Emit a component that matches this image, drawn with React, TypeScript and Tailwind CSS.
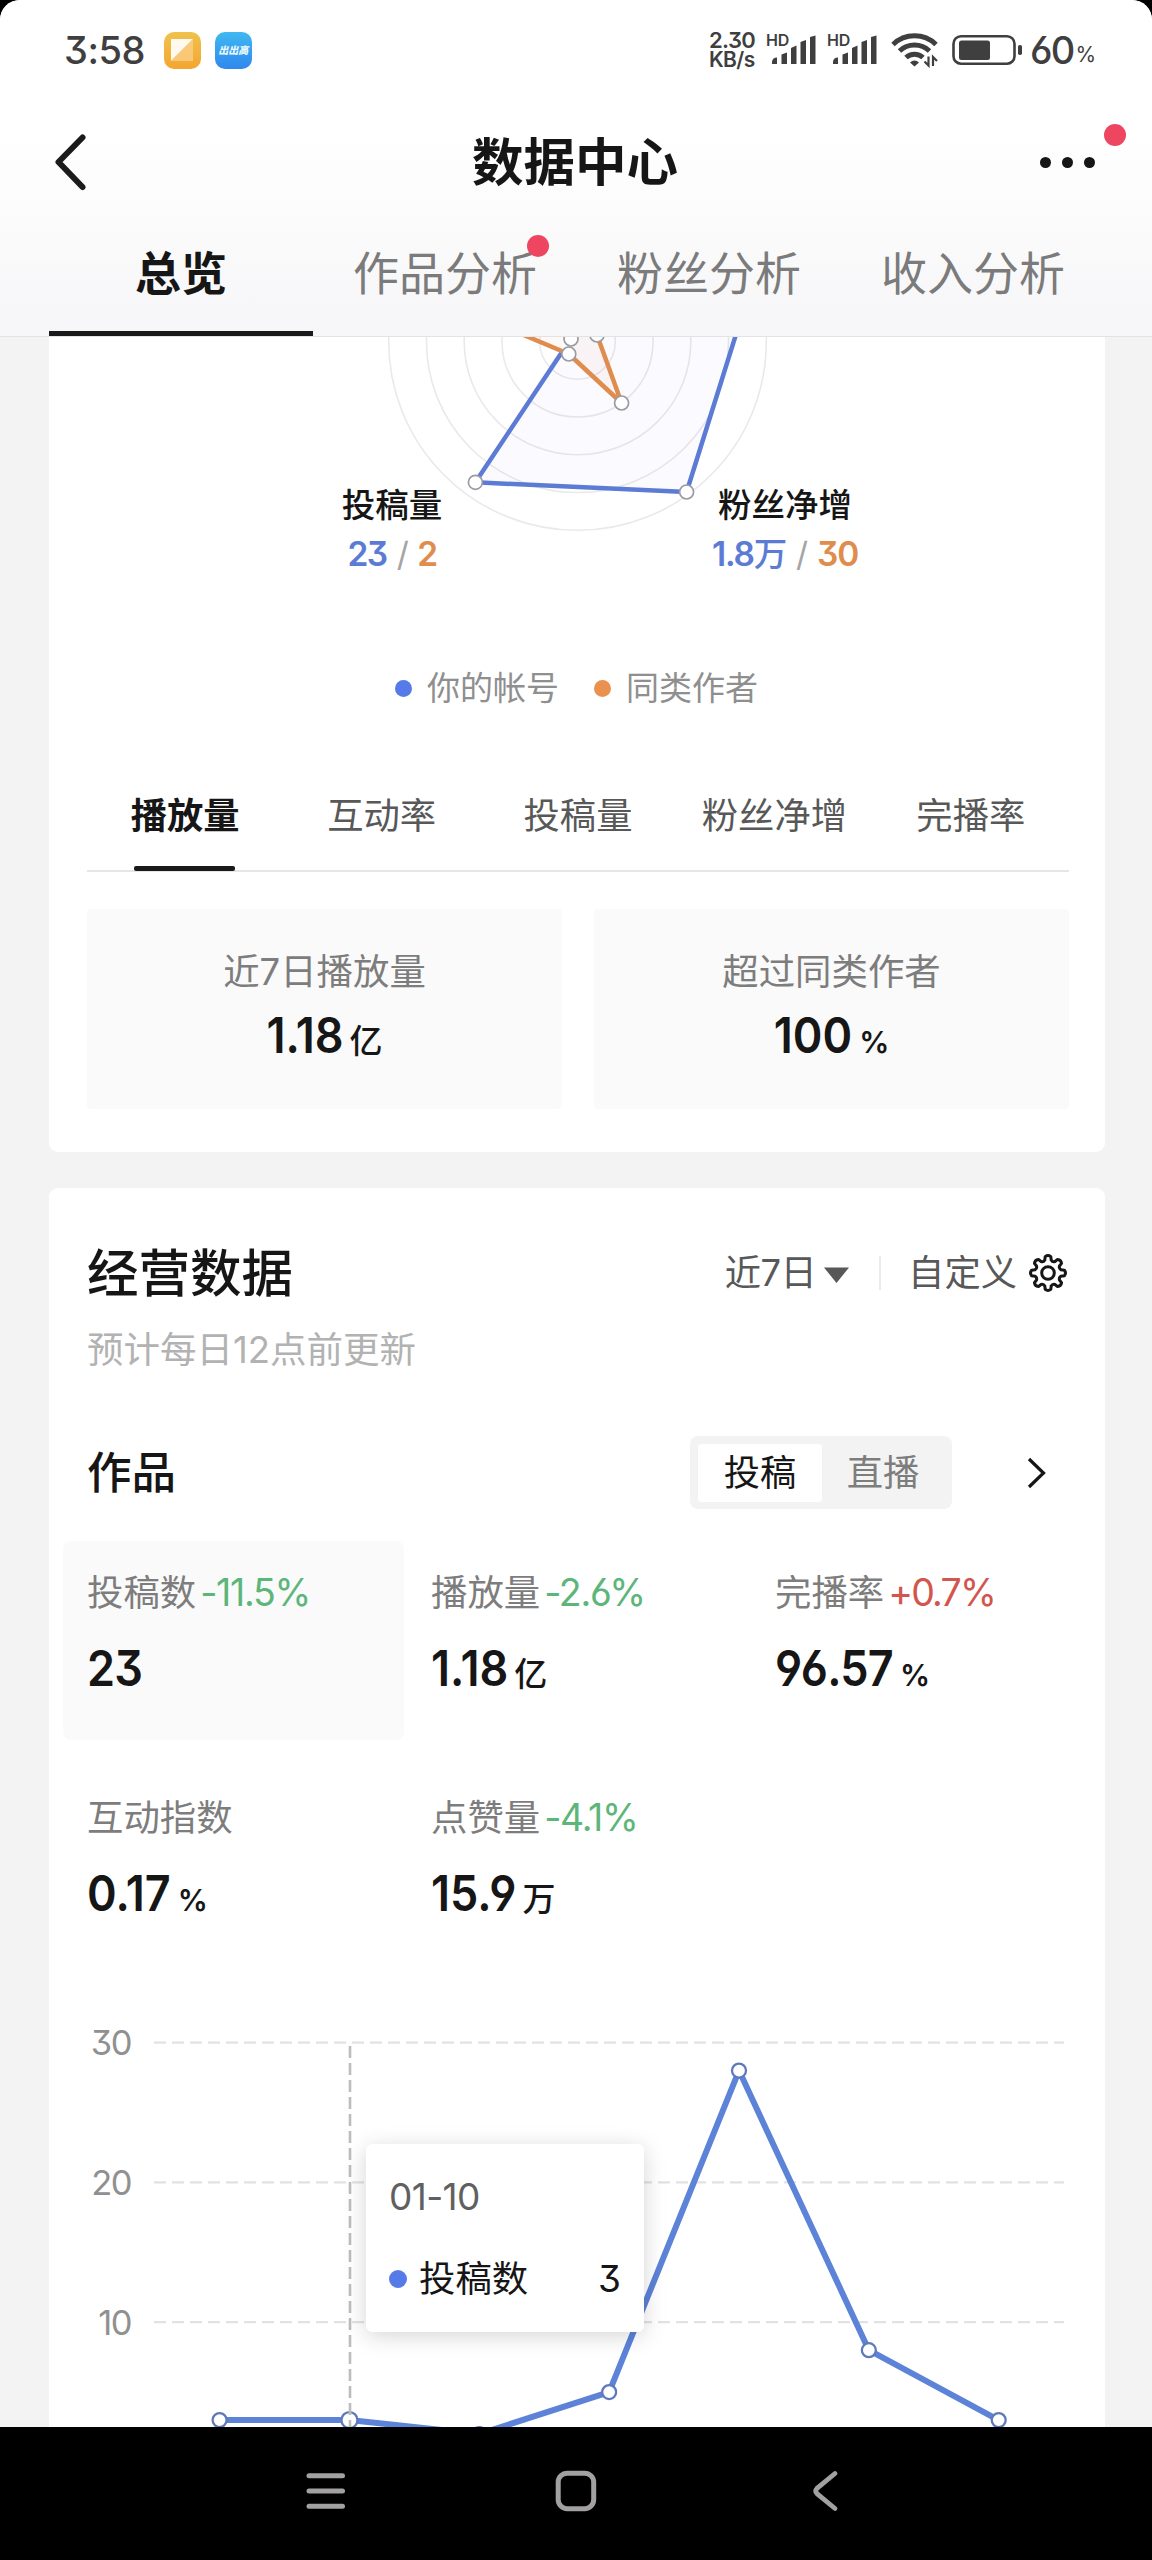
import React from "react";

const SignalBars = () => (
  <svg width="46" height="30" viewBox="0 0 46 30" fill="#3f3f3f">
    <path d="M1 29v-2.500a5 5 0 0 1 5-4V29z" />
    <path d="M10.500 29V19.500l5.500-2V29z" />
    <path d="M20 29V13l5.500-2.500V29z" />
    <path d="M29.500 29V7l5.500-2V29z" />
    <path d="M39 29V2l5.500-1.500V29z" />
  </svg>
);

const StatusBar = () => (
  <div className="flex h-[100px] shrink-0 items-center pl-[64px] pr-[56px] text-[#3f3f3f]">
    <span className="text-[38px] leading-[40px] font-medium tracking-[-0.5px]">3:58</span>
    <div className="ml-[19px] flex size-[37px] items-center justify-center rounded-[10px] bg-linear-to-b from-[#efc24c] to-[#f3a62f]">
      <svg width="22" height="22" viewBox="0 0 22 22">
        <path d="M0 0h22L0 22z" fill="#fffaf0" />
        <path d="M22 0v22H0z" fill="#fbd08b" opacity=".75" />
      </svg>
    </div>
    <div className="ml-[14px] flex size-[37px] items-center justify-center rounded-[10px] bg-linear-to-b from-[#41b8f0] to-[#3187ee]">
      <span className="text-[10px] leading-none font-black whitespace-nowrap text-[#e6f8ff] italic">出出高</span>
    </div>
    <div className="ml-auto flex items-center">
      <div className="w-[57px] text-[22px] leading-[20px] font-semibold">
        <div className="tracking-[-0.6px]">2.30</div>
        <div className="text-[21px] tracking-[-0.6px]">KB/s</div>
      </div>
      <div className="relative h-[30px] w-[61px]">
        <span className="absolute top-[-3px] left-0 text-[16px] leading-[16px] font-semibold">HD</span>
        <div className="pl-[5px]"><SignalBars /></div>
      </div>
      <div className="relative h-[30px] w-[64px]">
        <span className="absolute top-[-3px] left-0 text-[16px] leading-[16px] font-semibold">HD</span>
        <div className="pl-[5px]"><SignalBars /></div>
      </div>
      <svg width="48" height="36" viewBox="0 0 48 36" fill="none" stroke="#3f3f3f" strokeWidth="5">
        <path d="M2 12.500a31 31 0 0 1 43 0" />
        <path d="M8.500 19a22 22 0 0 1 30 0" />
        <path d="M15 25.500a12.500 12.500 0 0 1 17 0" />
        <path d="M23.500 34.500l-4.500-4q4.500-4 9 0z" fill="#3f3f3f" stroke="none" />
        <path d="M37.500 24.500v9l-4-4M42 34v-9l4 4" strokeWidth="2.200" />
      </svg>
      <svg className="ml-[13px]" width="72" height="32" viewBox="0 0 72 32">
        <rect x="1.500" y="2.200" width="61" height="27.500" rx="7.500" fill="none" stroke="#3f3f3f" strokeWidth="2.600" />
        <rect x="7" y="6.500" width="31" height="19.500" rx="2.500" fill="#3f3f3f" />
        <rect x="66" y="11" width="4" height="10" rx="1.800" fill="#3f3f3f" />
      </svg>
      <span className="ml-[6px] text-[38px] leading-[40px] font-medium tracking-[-1.8px]">60</span>
      <span className="ml-[2px] pt-[9px] text-[21px] leading-[24px]">%</span>
    </div>
  </div>
);

const Header = () => (
  <header className="flex h-[337px] shrink-0 flex-col border-b-[1.500px] border-[#e3e3e5] bg-[linear-gradient(180deg,#fff_0px,#fff_130px,#f6f6f8_337px)]">
    <StatusBar />
    <div className="flex h-[124px] shrink-0 items-center justify-between pr-[56px] pl-[53px]">
      <svg width="60" height="60" viewBox="0 0 60 60" fill="none" stroke="#1b1b1b" strokeWidth="6" strokeLinecap="round" strokeLinejoin="round">
        <path d="M29.500 5.500L5.500 30l24 25" />
      </svg>
      <h1 className="ml-[1px] text-[51.500px] leading-[60px] font-bold text-[#161616]">数据中心</h1>
      <div className="relative flex w-[60px] items-center justify-between pr-[1px] pl-[4px]">
        <i className="size-[11px] rounded-full bg-[#161616]" />
        <i className="size-[11px] rounded-full bg-[#161616]" />
        <i className="size-[11px] rounded-full bg-[#161616]" />
        <i className="absolute top-[-33px] left-[68px] size-[22px] rounded-full bg-[#ee4560]" />
      </div>
    </div>
    <nav className="mr-[47px] ml-[49px] grid h-[112px] grid-cols-4 text-center text-[46px] leading-[99px] text-[#7b7b7b]">
      <div className="border-b-[5px] border-[#1a1a1a] font-bold text-[#161616]">总览</div>
      <div className="relative">
        作品分析
        <i className="absolute top-[11px] left-[214px] size-[22px] rounded-full bg-[#ee4560]" />
      </div>
      <div>粉丝分析</div>
      <div>收入分析</div>
    </nav>
  </header>
);

const Radar = () => (
  <div className="relative h-[300px] w-full">
    <svg className="block" width="1056" height="200" viewBox="49 337 1056 200">
      <g fill="none" stroke="#e9e9e9" strokeWidth="1.600">
        {[37.8, 75.5, 113.3, 151, 188.8].map((r) => (
          <circle key={r} cx="577.5" cy="341.500" r={r} />
        ))}
      </g>
      <path d="M571 339L475.400 482.300L686.600 492L735.500 336L738 300H560z" fill="#8c78f0" fillOpacity=".035" />
      <path d="M526 336L568.800 354L621.600 403L597 335V300z" fill="#f09060" fillOpacity=".06" />
      <path d="M562 352L475.400 482.300L686.600 492L735.500 336L745 300" fill="none" stroke="#5b7bd5" strokeWidth="4.500" strokeLinejoin="round" />
      <path d="M500 325L568.800 354L621.600 403L597 335" fill="none" stroke="#df8d4e" strokeWidth="4.500" strokeLinejoin="round" />
      <g fill="#fff" stroke="#9b9ba3" strokeWidth="1.700">
        <circle cx="571" cy="339" r="7" />
        <circle cx="597" cy="335" r="7" />
        <circle cx="568.800" cy="354" r="7" />
        <circle cx="621.600" cy="403" r="7" />
        <circle cx="475.400" cy="482.300" r="7" />
        <circle cx="686.600" cy="492" r="7" />
      </g>
    </svg>
    <div className="absolute top-[146px] left-[243px] flex w-[200px] flex-col items-center">
      <span className="text-[33.500px] leading-[44px] font-medium text-[#161616]">投稿量</span>
      <span className="mt-[5px] text-[33.500px] leading-[44px] font-semibold tracking-[-1.6px] text-[#5b7bd5]">
        23<span className="mx-[10px] font-normal text-[#a5a5a5]">/</span><span className="text-[#df8d4e]">2</span>
      </span>
    </div>
    <div className="absolute top-[146px] left-[636px] flex w-[200px] flex-col items-center">
      <span className="text-[33.500px] leading-[44px] font-medium text-[#161616]">粉丝净增</span>
      <span className="mt-[5px] text-[33.500px] leading-[44px] font-semibold tracking-[-1.2px] whitespace-nowrap text-[#5b7bd5]">
        1.8<span className="font-medium">万</span><span className="mx-[10px] font-normal text-[#a5a5a5]">/</span><span className="text-[#df8d4e]">30</span>
      </span>
    </div>
  </div>
);

const Value = ({ n, unit }: { n: string; unit?: string }) => (
  <div className="flex items-baseline font-semibold text-[#161616]">
    <span
      className={
        n.includes("1")
          ? "inline-block origin-[0_46px] scale-y-[1.1] text-[45px] leading-[60px] tracking-[0px]"
          : "inline-block origin-[0_46px] scale-y-[1.1] text-[45px] leading-[60px] tracking-[-0.8px]"
      }
    >
      {n}
    </span>
    {unit && (
      <span className={unit === "%" ? "ml-[7px] text-[30px] leading-none" : "ml-[6px] text-[33px] leading-none font-medium"}>{unit}</span>
    )}
  </div>
);

const PeerCard = () => (
  <section className="mr-[47px] ml-[49px] h-[815px] shrink-0 overflow-hidden rounded-b-[9px] bg-white">
    <Radar />
    <div className="flex h-[103px] items-center pl-[346px] text-[33px] text-[#8f8f8f]">
      <i className="size-[17px] rounded-full bg-[#567be8]" />
      <span className="ml-[15px]">你的帐号</span>
      <i className="ml-[35px] size-[17px] rounded-full bg-[#ea914f]" />
      <span className="ml-[15px]">同类作者</span>
    </div>
    <div className="mr-[36px] ml-[38px] grid h-[132px] grid-cols-5 grid-rows-[130px] border-b-2 border-[#e6e6e6] text-center text-[36.300px] leading-[152px] text-[#585858]">
      <div className="relative font-bold text-[#161616]">
        播放量
        <i className="absolute bottom-[-1px] left-[47px] h-[5px] w-[101px] rounded-[2px] bg-[#1a1a1a]" />
      </div>
      <div>互动率</div>
      <div>投稿量</div>
      <div>粉丝净增</div>
      <div>完播率</div>
    </div>
    <div className="mr-[36px] ml-[38px] mt-[37px] grid h-[200px] grid-cols-2 gap-[32px] text-[36.400px] text-[#7d7d7d]">
      <div className="flex flex-col items-center rounded-[4px] bg-[#fafafa] pt-[39px]">
        <span className="leading-[48px]">近7日播放量</span>
        <div className="mt-[11px]"><Value n="1.18" unit="亿" /></div>
      </div>
      <div className="flex flex-col items-center rounded-[4px] bg-[#fafafa] pt-[39px]">
        <span className="leading-[48px]">超过同类作者</span>
        <div className="mt-[11px]"><Value n="100" unit="%" /></div>
      </div>
    </div>
  </section>
);

const gearPath = (() => {
  const pts: string[] = [];
  const n = 8;
  for (let i = 0; i < n; i++) {
    const a = (i * 2 * Math.PI) / n - Math.PI / 2;
    const at = (r: number, d: number) => `${(20 + r * Math.cos(a + d)).toFixed(2)} ${(20 + r * Math.sin(a + d)).toFixed(2)}`;
    pts.push(`${i ? "L" : "M"}${at(13.4, -0.24)}L${at(16.6, -0.17)}Q${at(18.6, 0)} ${at(16.6, 0.17)}L${at(13.4, 0.24)}Q${at(11.6, 0.393)} ${at(13.4, 0.545)}`);
  }
  return pts.join("") + "z";
})();

type Metric = { label: string; delta?: string; up?: boolean; n: string; unit?: string };
const metrics: Metric[] = [
  { label: "投稿数", delta: "-11.5%", n: "23" },
  { label: "播放量", delta: "-2.6%", n: "1.18", unit: "亿" },
  { label: "完播率", delta: "+0.7%", up: true, n: "96.57", unit: "%" },
  { label: "互动指数", n: "0.17", unit: "%" },
  { label: "点赞量", delta: "-4.1%", n: "15.9", unit: "万" },
];

const values = [3, 3, 2, 5, 28, 8, 3];
const px = (i: number) => 219.6 + i * 129.85;
const py = (v: number) => 2042.6 + (30 - v) * 13.98;

const Chart = () => (
  <div className="relative h-[436px] w-full shrink-0">
    <svg className="block" width="1056" height="436" viewBox="49 1991 1056 436">
      {[30, 20, 10].map((v) => (
        <g key={v}>
          <text x="131" y={py(v) + 12.5} textAnchor="end" fontSize="34.500" letterSpacing="-1.500" fill="#909090">{v}</text>
          <path d={`M154 ${py(v)}H1064`} stroke="#e2e2e2" strokeWidth="2.200" strokeDasharray="12 6" />
        </g>
      ))}
      <polyline points={values.map((v, i) => `${px(i)},${py(v)}`).join(" ")} fill="none" stroke="#5c83d8" strokeWidth="6" strokeLinejoin="round" />
      {values.map((v, i) => (
        <circle key={i} cx={px(i)} cy={py(v)} r={i === 1 ? 8 : 7} fill="#fff" stroke="#6079ba" strokeWidth="2.300" />
      ))}
      <path d="M350 2046V2427" stroke="#bdbdbd" strokeWidth="2.600" strokeDasharray="12 5" />
    </svg>
    <div className="absolute top-[153px] left-[317px] flex h-[188px] w-[278px] flex-col rounded-[6px] bg-white px-[23px] pt-[32px] text-[37px] leading-[42px] shadow-[0_4px_22px_rgba(0,0,0,0.17)]">
      <span className="tracking-[-0.6px] text-[#606060]">01-10</span>
      <div className="mt-[40px] flex items-center text-[#161616]">
        <i className="size-[18px] rounded-full bg-[#567be8]" />
        <span className="ml-[12px] text-[36.400px]">投稿数</span>
        <span className="ml-auto">3</span>
      </div>
    </div>
  </div>
);

const BusinessCard = () => (
  <section className="mr-[47px] ml-[49px] mt-[36px] flex h-[1239px] shrink-0 flex-col rounded-t-[9px] bg-white">
    <div className="mt-[55px] flex h-[60px] items-center pr-[37px] pl-[38px] text-[36.300px] text-[#585858]">
      <h2 className="text-[51.500px] leading-[60px] font-medium text-[#161616]">经营数据</h2>
      <span className="ml-auto tracking-[-0.6px]">近7日</span>
      <svg className="mt-[3px] ml-[8px]" width="25" height="16" viewBox="0 0 25 16"><path d="M0 .500h25L12.500 16z" fill="#585858" /></svg>
      <i className="ml-[30px] h-[34px] w-[2px] bg-[#ececec]" />
      <span className="ml-[27px]">自定义</span>
      <svg className="ml-[11px]" width="40" height="40" viewBox="0 0 40 40" fill="none" stroke="#161616" strokeWidth="3" strokeLinejoin="round">
        <path d={gearPath} />
        <circle cx="20" cy="20" r="6.300" />
      </svg>
    </div>
    <p className="mt-[23px] pl-[38px] text-[36.500px] leading-[48px] text-[#b2b2b2]">预计每日12点前更新</p>
    <div className="mt-[62px] flex h-[73px] items-center pr-[57px] pl-[38px]">
      <h3 className="text-[44.500px] leading-[60px] font-medium text-[#161616]">作品</h3>
      <div className="ml-auto flex h-[73px] w-[262px] items-center rounded-[8px] bg-[#f3f3f3] p-[8px] text-center text-[36.300px] leading-[58px] text-[#7d7d7d]">
        <span className="w-[124px] rounded-[4px] bg-white text-[#161616]">投稿</span>
        <span className="flex-1">直播</span>
      </div>
      <svg className="ml-[74px]" width="22" height="34" viewBox="0 0 22 34" fill="none" stroke="#161616" strokeWidth="3.200">
        <path d="M3 3l14.500 14L3 31" />
      </svg>
    </div>
    <div className="mt-[32px] grid h-[450px] shrink-0 grid-cols-[344px_344px_344px] grid-rows-[225px_225px] pl-[14px]">
      {metrics.map((m, i) => (
        <div key={m.label} className={i === 0 ? "h-[199px] w-[341px] rounded-[8px] bg-[#fafafa] pt-[28px] pl-[24px]" : "h-[199px] pt-[28px] pl-[24px]"}>
          <div className="flex text-[36.400px] leading-[48px] text-[#7d7d7d]">
            {m.label}
            {m.delta && (
              <span className={m.up ? "ml-[4px] text-[37.500px] tracking-[-1.800px] text-[#d2564e]" : "ml-[4px] text-[37.500px] tracking-[-1.300px] text-[#5cb67a]"}>{m.delta}</span>
            )}
          </div>
          <div className="mt-[23px]"><Value n={m.n} unit={m.unit} /></div>
        </div>
      ))}
    </div>
    <Chart />
  </section>
);

const SystemNav = () => (
  <div className="relative flex h-[133px] shrink-0 items-center bg-black pb-[6px] pl-[305px]">
    <svg width="42" height="42" viewBox="0 0 42 42" stroke="#a3a0a2" strokeWidth="5" strokeLinecap="round">
      <path d="M4 5.700H37.500M4 21H37.500M4 36.300H37.500" />
    </svg>
    <svg className="ml-[208px]" width="42" height="42" viewBox="0 0 42 42" fill="none" stroke="#a3a0a2" strokeWidth="5">
      <rect x="3.200" y="3.200" width="35.500" height="35.500" rx="9" />
    </svg>
    <svg className="ml-[214px]" width="30" height="42" viewBox="0 0 30 42" fill="none" stroke="#a3a0a2" strokeWidth="4.800" strokeLinecap="round">
      <path d="M24 3.500L6 18.300q-2.500 2.700 0 5.400L24 38.500" />
    </svg>
  </div>
);

export default function App() {
  return (
    <div className="h-[2560px] w-[1152px] overflow-hidden bg-black font-['Inter','Noto_Sans_CJK_SC',sans-serif] [font-feature-settings:'cv03','cv04','cv09']">
      <div className="flex h-[2560px] flex-col overflow-hidden rounded-t-[20px] bg-[#f3f3f3]">
        <Header />
        <PeerCard />
        <BusinessCard />
        <SystemNav />
      </div>
    </div>
  );
}
